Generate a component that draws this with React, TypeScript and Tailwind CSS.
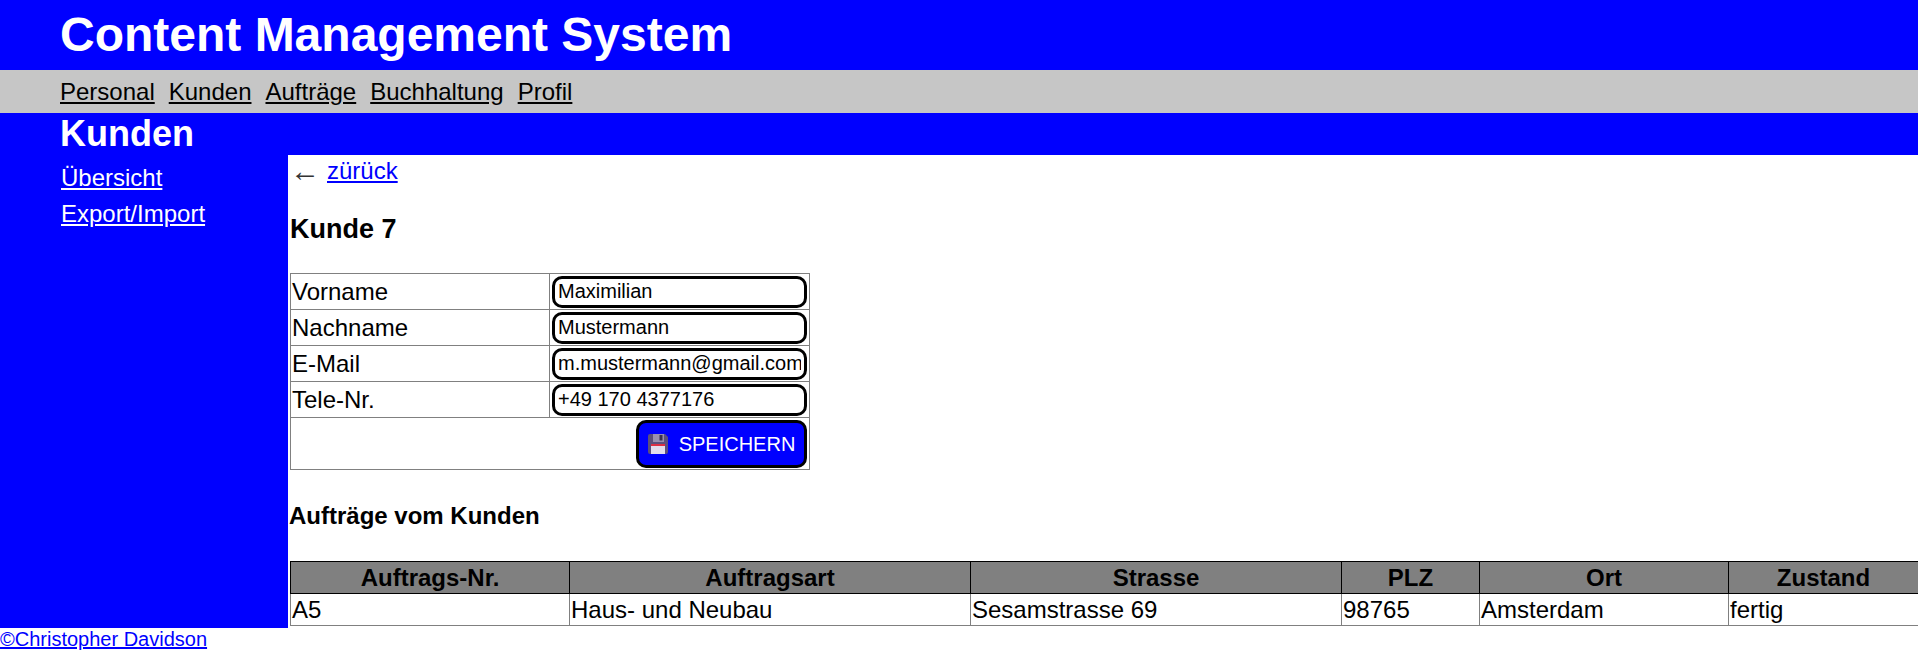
import React from "react";

const navLinks = ["Personal", "Kunden", "Aufträge", "Buchhaltung", "Profil"];

const customerFields = [
  { label: "Vorname", value: "Maximilian" },
  { label: "Nachname", value: "Mustermann" },
  { label: "E-Mail", value: "m.mustermann@gmail.com" },
  { label: "Tele-Nr.", value: "+49 170 4377176" },
];

const orderColumns = [
  { title: "Auftrags-Nr.", width: "w-[279px]", value: "A5" },
  { title: "Auftragsart", width: "w-[401px]", value: "Haus- und Neubau" },
  { title: "Strasse", width: "w-[371px]", value: "Sesamstrasse 69" },
  { title: "PLZ", width: "w-[138px]", value: "98765" },
  { title: "Ort", width: "w-[249px]", value: "Amsterdam" },
  { title: "Zustand", width: "w-[190px]", value: "fertig" },
];

const FloppyIcon = () => (
  <svg width="20" height="20" viewBox="0 0 20 20" className="shrink-0">
    <path d="M0 2a2 2 0 0 1 2-2h15l3 3v15a2 2 0 0 1-2 2H2a2 2 0 0 1-2-2z" fill="#5c4f7c" />
    <rect x="5" y="0" width="11" height="8" fill="#9a90b0" />
    <rect x="11.5" y="1" width="3" height="5.5" fill="#3a3052" />
    <rect x="3" y="10" width="14" height="10" fill="#e3dcec" />
    <rect x="3" y="10" width="14" height="2" fill="#dd2e44" />
  </svg>
);

export default function App() {
  return (
    <div className="font-['Liberation_Sans',Arial,sans-serif] text-black bg-white min-h-[664px]">
      <header className="bg-[#0000ff] h-[70px] pl-[60px] flex items-center">
        <h1 className="text-[48px] leading-none font-bold text-white">Content Management System</h1>
      </header>
      <nav className="bg-[#c6c6c6] h-[43px] pl-[60px] flex items-center gap-[14px] text-[24px]">
        {navLinks.map((link) => (
          <a key={link} href="#" className="underline text-black">
            {link}
          </a>
        ))}
      </nav>
      <div className="bg-[#0000ff] h-[42px] pl-[60px] flex items-center">
        <h2 className="text-[36px] leading-none font-bold text-white">Kunden</h2>
      </div>
      <div className="flex h-[473px]">
        <aside className="w-[288px] shrink-0 bg-[#0000ff] pl-[61px] pt-[9px] flex flex-col gap-[8px] text-[24px] leading-[28px]">
          <a href="#" className="underline text-white">Übersicht</a>
          <a href="#" className="underline text-white">Export/Import</a>
        </aside>
        <main className="flex-1 min-w-0 text-[24px]">
          <p className="h-[32px] leading-[32px] flex items-center">
            <span className="ml-[2px] mr-[7px] text-[#333333] text-[30px] leading-none">←</span>
            <a href="#" className="underline text-[#0000ff]">zürück</a>
          </p>
          <h3 className="text-[27px] leading-[32px] font-bold ml-[2px] mt-[26px]">Kunde 7</h3>
          <table className="ml-[2px] mt-[28px] w-[520px] border-collapse table-fixed">
            <tbody>
              {customerFields.map((field) => (
                <tr key={field.label} className="h-[36px]">
                  <td className="w-[259px] border border-[#808080] px-[1px] leading-none">{field.label}</td>
                  <td className="border border-[#808080] px-[2px]">
                    <input
                      readOnly
                      value={field.value}
                      className="block w-[255px] h-[32px] border-[3px] border-black rounded-[10px] px-[3px] text-[20px] text-black outline-none"
                    />
                  </td>
                </tr>
              ))}
              <tr className="h-[52px]">
                <td colSpan={2} className="border border-[#808080] px-[2px] py-[1px]">
                  <div className="flex justify-end">
                    <button className="h-[48px] w-[171px] bg-[#0000ff] border-[3px] border-black rounded-[10px] text-white text-[20px] flex items-center justify-center gap-[11px]">
                      <FloppyIcon />
                      SPEICHERN
                    </button>
                  </div>
                </td>
              </tr>
            </tbody>
          </table>
          <h4 className="text-[24px] leading-[28px] font-bold ml-[1px] mt-[32px]">Aufträge vom Kunden</h4>
          <table className="ml-[2px] mt-[31px] w-[1628px] border-collapse table-fixed">
            <thead>
              <tr className="h-[32px] bg-[#808080]">
                {orderColumns.map((col) => (
                  <th key={col.title} className={`${col.width} border border-black font-bold text-center leading-none`}>
                    {col.title}
                  </th>
                ))}
              </tr>
            </thead>
            <tbody>
              <tr className="h-[32px]">
                {orderColumns.map((col) => (
                  <td key={col.title} className="border border-[#808080] px-[1px] leading-none">
                    {col.value}
                  </td>
                ))}
              </tr>
            </tbody>
          </table>
        </main>
      </div>
      <footer className="text-[20px] leading-[22px]">
        <a href="#" className="underline text-[#0000ff]">©Christopher Davidson</a>
      </footer>
    </div>
  );
}
